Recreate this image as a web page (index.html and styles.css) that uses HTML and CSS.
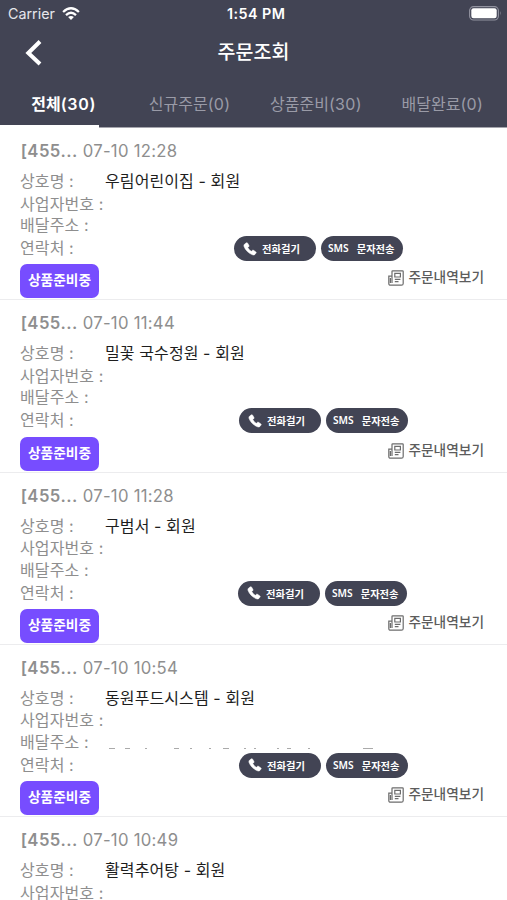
FILE: index.html
```
<!DOCTYPE html>
<html lang="ko">
<head>
<meta charset="utf-8">
<title>주문조회</title>
<link rel="stylesheet" href="styles.css">
</head>
<body>
<svg width="0" height="0" class="defs">
  <symbol id="phone" viewBox="0 0 16 16"><path d="M2 2.2 4 .9Q4.8.5 5.3 1.3L6.8 4Q7.2 4.8 6.5 5.4L5.4 6.3Q6.8 9 9.5 10.7L10.7 9.6Q11.3 9 12 9.5L14.7 11.3Q15.4 11.9 14.9 12.6L13.6 14.3Q12.6 15.3 10.8 14.6C6.2 12.8 2.6 9.2 1.1 4.9Q.7 3.2 2 2.2Z" fill="#fff" stroke="#fff" stroke-width=".6"/></symbol>
  <symbol id="paper" viewBox="0 0 16 16"><g fill="none" stroke="#6c6c6c" stroke-width="1.2"><path d="M4 13V1.5Q4 .8 4.7.8H14.5Q15.2.8 15.2 1.5V13.4Q15.2 15.2 13.4 15.2H2.5Q.8 15.2.8 13.4V6.2H4M2.4 8V13"/><path d="M6.8 3.3H12.4V7H6.8ZM6.8 9.3H12.4M6.8 11.7H10.5"/></g></symbol>
</svg>
<header class="top">
  <div class="status">
    <span class="carrier">Carrier</span>
    <svg class="wifi" width="18" height="14" viewBox="0 0 18 14"><g fill="none" stroke="#fff" stroke-width="2.3"><path d="M1.1 5Q9-2.4 16.9 5"/><path d="M4 8.1Q9 3.4 14 8.1"/></g><path d="M6.1 10.1Q9 7.8 11.9 10.1L9 13Z" fill="#fff"/></svg>
    <span class="clock">1:54 PM</span>
    <svg class="battery" width="33" height="15" viewBox="0 0 33 15"><rect x=".6" y=".6" width="28.8" height="13.4" rx="4" fill="none" stroke="#9293a0" stroke-width="1.1"/><rect x="2.3" y="2.3" width="25.4" height="10" rx="2.2" fill="#fff"/><path d="M31 5Q32.4 7.3 31 9.6Z" fill="#9293a0"/></svg>
  </div>
  <div class="nav">
    <svg class="back" width="18" height="28" viewBox="0 0 18 28"><path d="M15 2.5 3.3 14 15 25" fill="none" stroke="#fff" stroke-width="4"/></svg>
    <h1>주문조회</h1>
  </div>
  <nav class="tabs">
    <a class="tab active">전체<span>(30)</span></a>
    <a class="tab">신규주문<span>(0)</span></a>
    <a class="tab">상품준비<span>(30)</span></a>
    <a class="tab">배달완료<span>(0)</span></a>
  </nav>
  <div class="indicator"></div>
</header>
<main id="orders"></main>
<script src="orders.js"></script>
</body>
</html>
```
FILE: styles.css
```
* { box-sizing: border-box; }
body {
  margin: 0;
  height: 900px;
  overflow: hidden;
  background: #fff;
  font-family: Inter, "Noto Sans CJK KR", sans-serif;
  font-size: 16px;
  color: #8e8e8e;
}
.defs { display: block; }
.top { height: 128px; background: linear-gradient(#424454 127px, #a5a5ad 127px); color: #fff; }
.status { display: grid; grid-template-columns: 53px 166px 1fr 33px; height: 27px; padding: 0 5px 0 8px; align-items: center; }
.carrier { font-size: 14.3px; line-height: 27px; color: #e6e6ec; }
.wifi { margin-left: 1px; }
.clock { font-size: 14.3px; font-weight: 600; line-height: 27px; letter-spacing: .45px; white-space: nowrap; }
.nav { display: grid; grid-template-columns: 60px 1fr 60px; height: 49px; align-items: center; }
.back { margin-left: 25px; }
h1 { margin: 0; text-align: center; font-size: 19.5px; font-weight: 500; line-height: 51px; }
.tabs { display: grid; grid-template-columns: repeat(4, 126.4px); height: 49px; }
.tab { color: #9a9ba7; text-align: center; line-height: 56px; white-space: nowrap; }
.tab span { letter-spacing: .3px; }
.active { color: #fff; font-weight: 600; padding-left: 1px; }
.active span { letter-spacing: .7px; }
.indicator { width: 99px; height: 3px; background: #fff; }
#orders { height: 772px; overflow: hidden; }
.order { height: 172.25px; padding: 11px 0 0 20px; border-bottom: 1.5px solid #ececee; }
.order:last-child { height: 83px; border: 0; }
.stamp { height: 24px; line-height: 25px; white-space: pre; font-size: 16.7px; letter-spacing: .27px; padding-left: .7px; }
.stamp b { font-weight: 600; letter-spacing: .45px; }
.row { display: flex; height: 21.7px; line-height: 22px; white-space: nowrap; }
.row.name { margin-top: 7px; height: 22.5px; }
.label { width: 85px; letter-spacing: .1px; }
.value { color: #1e1e1e; letter-spacing: .1px; }
.marks { margin-top: 9px; }
.pills { display: flex; gap: 5px; margin-top: -1px; }
.contact { margin-top: 1.2px; }
.pill { display: flex; align-items: center; width: 82px; height: 25px; border-radius: 13px; background: #424454; color: #fff; font: 700 10.3px/25px "Noto Sans CJK KR", sans-serif; }
.call { padding-left: 9px; gap: 5px; }
.sms { padding-left: 7px; gap: 8px; }
.sms span:first-child { font-family: "Noto Sans", sans-serif; font-weight: 600; font-size: 10.2px; }
.foot { display: flex; height: 34px; margin-top: 5.7px; justify-content: space-between; }
.badge { width: 79px; height: 34px; border-radius: 7px; background: #774dff; color: #fff; text-align: center; font-size: 13.7px; font-weight: 700; line-height: 33.5px; }
.detail { display: flex; gap: 4px; padding: 6px 23px 0 0; color: #5c5c5c; font-size: 13.7px; font-weight: 500; line-height: 15px; }
```
FILE: orders.js
```
const orders = [
  ["07-10 12:28", "우림어린이집 - 회원", 234],
  ["07-10 11:44", "밀꽃 국수정원 - 회원", 239],
  ["07-10 11:28", "구범서 - 회원", 238],
  ["07-10 10:54", "동원푸드시스템 - 회원", 239, true],
  ["07-10 10:49", "활력추어탕 - 회원"]
];
const marks = `<svg class="marks" width="280" height="12"><path d="M4 8.5h6M20 8.5h5M40 8.5h2M69 8.5h5M85 8.5h2M104 8.5h2M118 8.5h6M139 8.5h2M149 8.5h2M172 8.5h2M182 8.5h4M203 8.5h2M258 8.5h10" stroke="#aaa" stroke-width="1"/></svg>`;
document.getElementById("orders").innerHTML = orders.map(([time, name, x, hasMarks]) => `
<article class="order">
  <div class="stamp"><b>[455...</b> <span class="time">${time}</span></div>
  <div class="row name"><span class="label">상호명 :</span><span class="value">${name}</span></div>
  <div class="row"><span class="label">사업자번호 :</span></div>
  ${x ? `<div class="row"><span class="label">배달주소 :</span>${hasMarks ? marks : ""}</div>
  <div class="row contact"><span class="label">연락처 :</span>
    <div class="pills" style="margin-left:${x - 105}px">
      <span class="pill call"><svg width="14" height="14"><use href="#phone"/></svg>전화걸기</span>
      <span class="pill sms"><span>SMS</span><span>문자전송</span></span>
    </div>
  </div>
  <div class="foot"><span class="badge">상품준비중</span><span class="detail"><svg width="16" height="16"><use href="#paper"/></svg>주문내역보기</span></div>` : ""}
</article>`).join("");
```
